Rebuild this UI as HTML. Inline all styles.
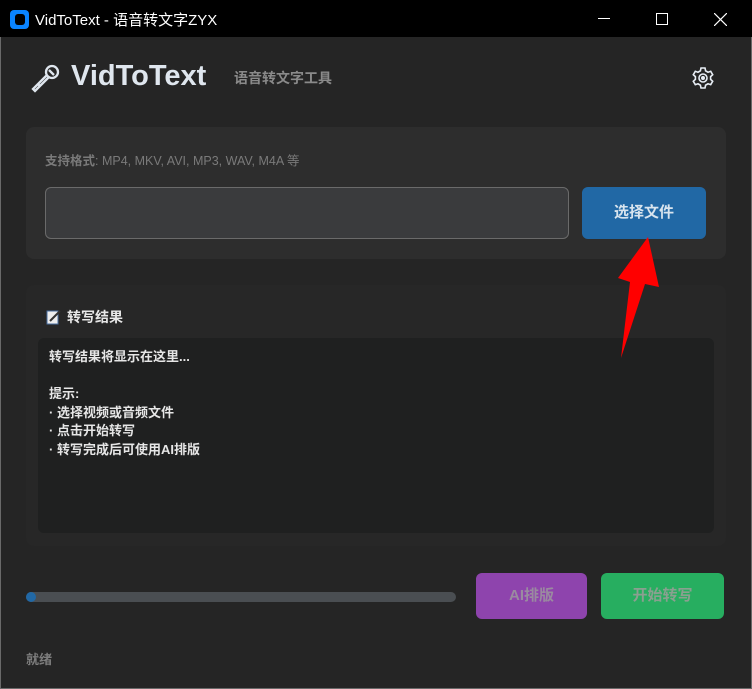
<!DOCTYPE html>
<html><head><meta charset="utf-8"><style>
*{margin:0;padding:0;box-sizing:border-box}
body{width:752px;height:689px;background:#252525;font-family:"Liberation Sans","Noto Sans CJK SC",sans-serif;position:relative;overflow:hidden}
.abs{position:absolute}
.t{font-weight:bold}
</style></head><body>
<div class="abs" style="left:0;top:0;width:752px;height:689px;border:1px solid #6a6a6a"></div>
<div class="abs" style="left:0;top:0;width:752px;height:37px;background:#000"></div>
<div class="abs" style="left:10px;top:10px;width:19px;height:19px;border-radius:4px;background:#0a84ff"></div>
<div class="abs" style="left:15px;top:14px;width:10px;height:11px;border-radius:3px;background:#000"></div>
<div class="abs" style="left:35px;top:9px;color:#fff;font-size:15px">VidToText - 语音转文字ZYX</div>
<div class="abs" style="left:598px;top:18px;width:12px;height:1px;background:#fff"></div>
<div class="abs" style="left:656px;top:13px;width:12px;height:12px;border:1px solid #fff"></div>
<svg class="abs" style="left:714px;top:13px" width="13" height="13"><path d="M0 0L13 13M13 0L0 13" stroke="#fff" stroke-width="1.2"/></svg>
<svg class="abs" style="left:29px;top:63px" width="32" height="32" viewBox="0 0 32 32" fill="none" stroke="#dfe6ee" stroke-width="2.3"><circle cx="23" cy="9" r="6"/><path d="M18 12L4 26l2 2 14-14"/><path d="M20 7l5 5M9 21l2 2"/></svg>
<div class="abs t" style="left:71px;top:60px;color:#dfe6ee;font-size:29px">VidToText</div>
<div class="abs t" style="left:234px;top:68px;color:#8a8a8a;font-size:14px">语音转文字工具</div>
<svg class="abs" style="left:692px;top:67px" width="22" height="22" viewBox="0 0 22 22" fill="none" stroke="#e8eef5" stroke-width="1.6"><path d="M9 1h4l.6 2.8 2.4 1.4 2.7-.9 2 3.4-2.1 1.9v2.8l2.1 1.9-2 3.4-2.7-.9-2.4 1.4L13 21H9l-.6-2.8-2.4-1.4-2.7.9-2-3.4 2.1-1.9V9.6L1.3 7.7l2-3.4 2.7.9 2.4-1.4z"/><circle cx="11" cy="11" r="4"/><circle cx="11" cy="11" r="1.2" fill="#e8eef5"/></svg>
<div class="abs" style="left:26px;top:127px;width:700px;height:132px;background:#2d2d2d;border-radius:8px"></div>
<div class="abs" style="left:45px;top:150px;color:#7a7a7a;font-size:12.5px"><b>支持格式</b>: MP4, MKV, AVI, MP3, WAV, M4A 等</div>
<div class="abs" style="left:45px;top:187px;width:524px;height:52px;background:#3a3b3d;border:1.5px solid #6a6a6a;border-radius:6px"></div>
<div class="abs t" style="left:582px;top:187px;width:124px;height:52px;background:#2168a5;border-radius:6px;color:#d8e4ee;font-size:15px;text-align:center;line-height:52px">选择文件</div>
<div class="abs" style="left:26px;top:285px;width:700px;height:261px;background:#272727;border-radius:8px"></div>
<svg class="abs" style="left:46px;top:309px" width="16" height="16"><rect x="1" y="2" width="11" height="13" fill="#eee" stroke="#4a6fa0"/><path d="M4 12L14 2" stroke="#333" stroke-width="2"/></svg>
<div class="abs t" style="left:67px;top:307px;color:#e8e8e8;font-size:14px">转写结果</div>
<div class="abs" style="left:38px;top:338px;width:676px;height:195px;background:#1f2020;border-radius:6px"></div>
<div class="abs t" style="left:49px;top:348px;color:#e6e6e6;font-size:13px;line-height:18.5px">转写结果将显示在这里...<br><br>提示:<br>· 选择视频或音频文件<br>· 点击开始转写<br>· 转写完成后可使用AI排版</div>
<div class="abs" style="left:26px;top:592px;width:430px;height:10px;background:#4a4e52;border-radius:5px"></div>
<div class="abs" style="left:26px;top:592px;width:10px;height:10px;background:#2168a5;border-radius:5px"></div>
<div class="abs t" style="left:476px;top:573px;width:111px;height:46px;background:#8e44ad;border-radius:6px;color:#9a8aa0;font-size:15px;text-align:center;line-height:46px">AI排版</div>
<div class="abs t" style="left:601px;top:573px;width:123px;height:46px;background:#27ae60;border-radius:6px;color:#8aa090;font-size:15px;text-align:center;line-height:46px">开始转写</div>
<div class="abs t" style="left:26px;top:649px;color:#7d7d7d;font-size:13px">就绪</div>
<svg class="abs" style="left:0;top:0" width="752" height="689"><path d="M648 237L618 278 630 282 621 358 645 284 659 287Z" fill="#ff0000"/></svg>
</body></html>
